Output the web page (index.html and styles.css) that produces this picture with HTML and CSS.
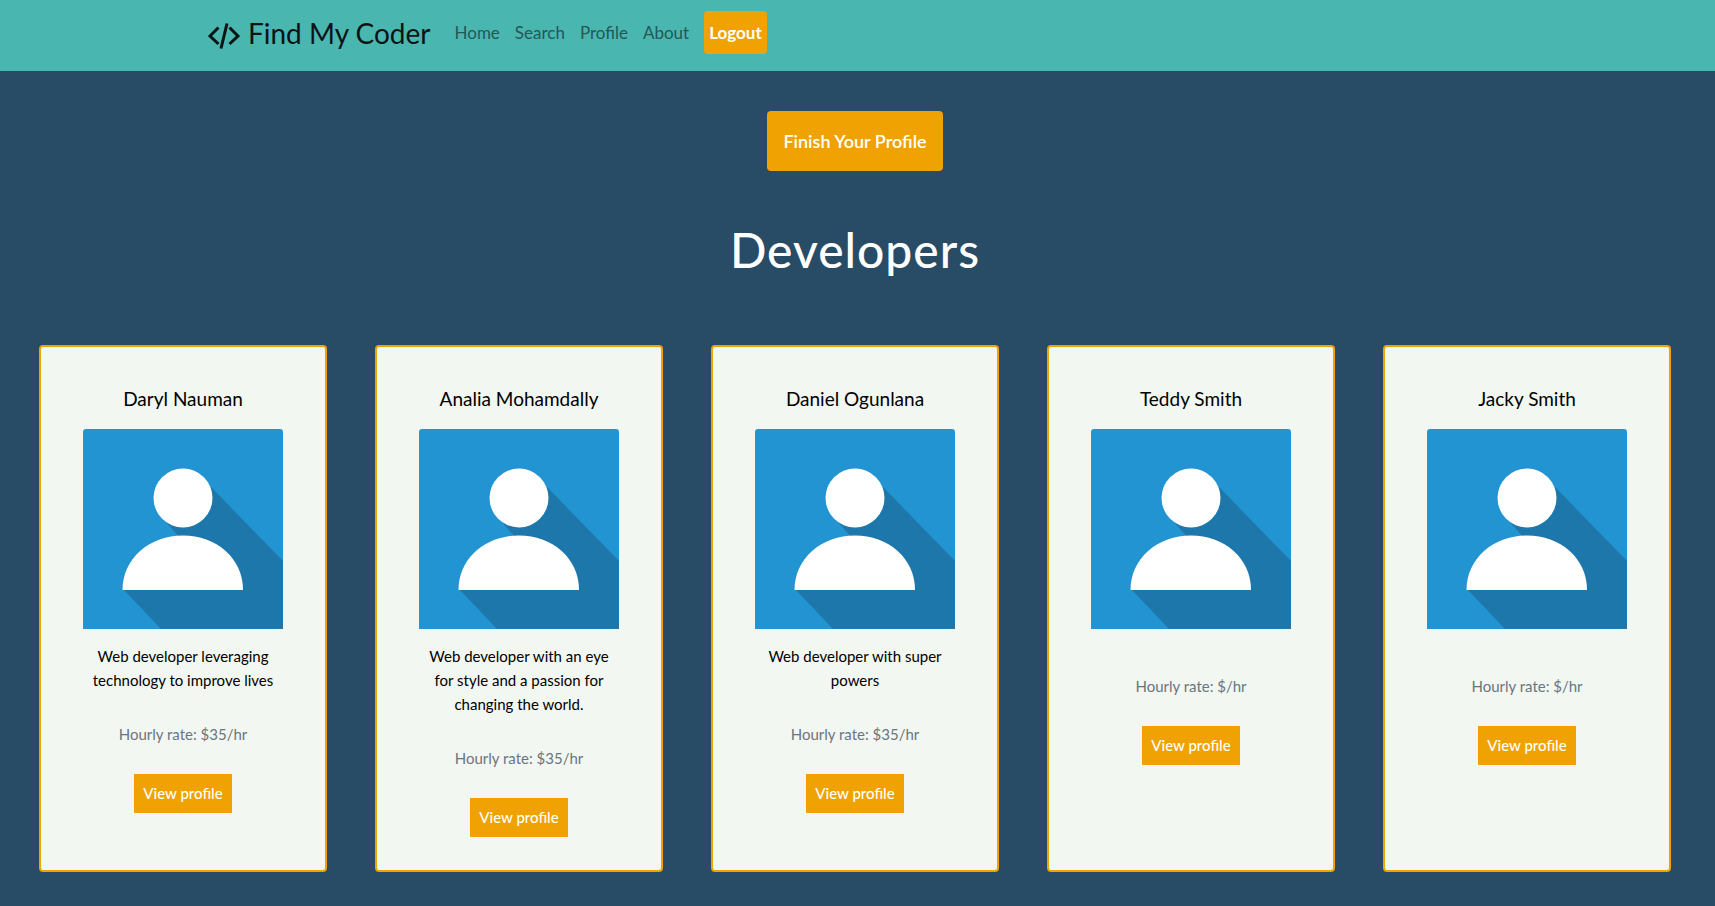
FILE: index.html
```
<!DOCTYPE html>
<html lang="en">
<head>
<meta charset="utf-8">
<meta name="viewport" content="width=device-width, initial-scale=1">
<title>Find My Coder</title>
<link rel="stylesheet" href="styles.css">
</head>
<body>
<svg class="defs" aria-hidden="true">
  <symbol id="avatar" viewBox="0 0 200 200">
    <rect width="200" height="200" fill="#2294d2"/>
    <path d="M128 58 L200 132 V200 H78 L40 160 L95 107 L80 90 Z" fill="#1e77ab"/>
    <path d="M80 90 L95 107 C72 110 40 128 40 161 L30 150 L60 60 Z" fill="#2294d2"/>
    <circle cx="100" cy="69" r="29.5" fill="#fff"/>
    <path d="M39.500 161 C39.500 129 67 106.500 100 106.500 S160 129 160 161 Z" fill="#fff"/>
  </symbol>
</svg>
<header class="navbar">
  <a class="brand" href="#">
    <svg class="brand-icon" viewBox="0 0 32 28" aria-hidden="true"><g fill="none" stroke="#0c1413" stroke-width="3"><path d="M10.500 5.500 L2 14 L10.500 22"/><path d="M21.500 5.500 L30 14 L21.500 22"/><path d="M19 1.500 L13 26.500"/></g></svg>
    <span>Find My Coder</span>
  </a>
  <nav class="nav">
    <a href="#">Home</a>
    <a href="#">Search</a>
    <a href="#">Profile</a>
    <a href="#">About</a>
    <button class="logout" type="button">Logout</button>
  </nav>
</header>
<main class="page">
  <button class="finish" type="button">Finish Your Profile</button>
  <h1 class="title">Developers</h1>
  <section class="cards">
    <article class="card">
      <h2 class="name">Daryl Nauman</h2>
      <svg class="photo" role="img" aria-label="Daryl Nauman"><use href="#avatar"/></svg>
      <p class="bio">Web developer leveraging technology to improve lives</p>
      <p class="rate">Hourly rate: $35/hr</p>
      <a class="view" href="#">View profile</a>
    </article>
    <article class="card">
      <h2 class="name">Analia Mohamdally</h2>
      <svg class="photo" role="img" aria-label="Analia Mohamdally"><use href="#avatar"/></svg>
      <p class="bio">Web developer with an eye for style and a passion for changing the world.</p>
      <p class="rate">Hourly rate: $35/hr</p>
      <a class="view" href="#">View profile</a>
    </article>
    <article class="card">
      <h2 class="name">Daniel Ogunlana</h2>
      <svg class="photo" role="img" aria-label="Daniel Ogunlana"><use href="#avatar"/></svg>
      <p class="bio">Web developer with super powers</p>
      <p class="rate">Hourly rate: $35/hr</p>
      <a class="view" href="#">View profile</a>
    </article>
    <article class="card">
      <h2 class="name">Teddy Smith</h2>
      <svg class="photo" role="img" aria-label="Teddy Smith"><use href="#avatar"/></svg>
      <p class="bio"></p>
      <p class="rate">Hourly rate: $/hr</p>
      <a class="view" href="#">View profile</a>
    </article>
    <article class="card">
      <h2 class="name">Jacky Smith</h2>
      <svg class="photo" role="img" aria-label="Jacky Smith"><use href="#avatar"/></svg>
      <p class="bio"></p>
      <p class="rate">Hourly rate: $/hr</p>
      <a class="view" href="#">View profile</a>
    </article>
  </section>
</main>
</body>
</html>
```
FILE: styles.css
```
* { box-sizing: border-box; }
body {
  margin: 0;
  background: #284b66;
  color: #000;
  font-family: "Gill Sans", "Gill Sans MT", Lato, sans-serif;
  font-size: 16px;
  line-height: 24px;
}
a { text-decoration: none; }
button { font-family: inherit; border: 0; cursor: pointer; }
.defs { position: absolute; width: 0; height: 0; }

.navbar {
  display: flex;
  align-items: center;
  gap: 24px;
  padding: 11px 208px 17px;
  background: #4ab6b0;
}
.brand {
  display: flex;
  align-items: center;
  gap: 8px;
  color: #0c1413;
  font-size: 28px;
  line-height: 40px;
}
.brand-icon { width: 32px; height: 28px; margin-top: 6px; }
.nav { display: flex; align-items: center; gap: 15px; }
.nav a { color: #235855; font-size: 17px; }
.logout {
  padding: 0 5px;
  border-radius: 4px;
  background: #f0a202;
  color: #fff;
  font-size: 17px;
  font-weight: 700;
  line-height: 43px;
}

.page {
  display: flex;
  flex-direction: column;
  align-items: center;
  padding: 40px 5px 32px 0;
}
.finish {
  padding: 0 16px;
  border-radius: 4px;
  background: #f0a202;
  color: #fff;
  font-size: 18px;
  font-weight: 600;
  line-height: 60px;
}
.title {
  margin: 47px 0 63px;
  color: #fff;
  font-size: 48px;
  font-weight: 500;
  line-height: 64px;
  letter-spacing: 1px;
}
.cards {
  display: flex;
  flex-wrap: wrap;
  justify-content: center;
  gap: 48px;
}
.card {
  display: flex;
  flex-direction: column;
  align-items: center;
  width: 288px;
  padding: 40px 42px 33px;
  border: 2px solid #f0a202;
  border-radius: 4px;
  background: #f2f7f2;
  text-align: center;
}
.name { margin: 0 0 18px; font-size: 19px; font-weight: 400; line-height: 24px; }
.photo { width: 200px; height: 200px; border-radius: 3px 3px 0 0; }
.bio { margin: 15px 4px 30px; font-size: 15px; }
.rate { margin: 0 0 28px; color: #6c757d; font-size: 15px; }
.view {
  padding: 0 9px;
  background: #f0a202;
  color: #fff;
  font-size: 15px;
  font-weight: 500;
  line-height: 39px;
}
```
